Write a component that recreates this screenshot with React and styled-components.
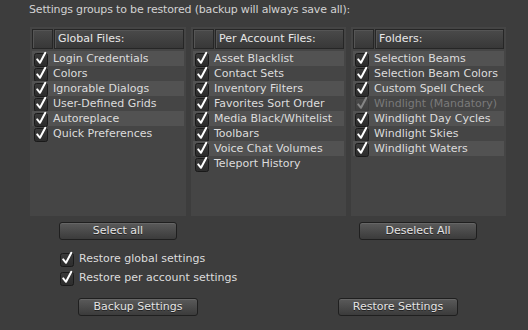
import React from "react";
import styled, { createGlobalStyle } from "styled-components";

const Global = createGlobalStyle`
  html, body { margin: 0; padding: 0; background: #3d3d3d; }
  body { font-family: "DejaVu Sans", "Liberation Sans", sans-serif; font-size: 11px; }
`;

const Page = styled.div`
  width: 528px;
  height: 330px;
  background: #3d3d3d;
  color: #d8d8d8;
  display: flex;
  flex-direction: column;
  overflow: hidden;
`;

const Title = styled.div`
  padding: 3px 0 0 29px;
  height: 14px;
  line-height: 14px;
  color: #d2d2d2;
  letter-spacing: -0.17px;
`;

const Columns = styled.div`
  display: flex;
  gap: 5px;
  margin: 10px 0 0 30px;
`;

const Panel = styled.div`
  width: ${(p) => p.$w}px;
  height: 189px;
  box-sizing: border-box;
  padding: 2px;
  background: #454545;
  display: flex;
  flex-direction: column;
`;

const Header = styled.div`
  display: flex;
  height: 20px;
  margin-bottom: 2px;
`;

const HeadCell = styled.div`
  box-sizing: border-box;
  height: 20px;
  border: 1px solid #262626;
  background: linear-gradient(#4a4a4a, #383838);
  box-shadow: inset 1px 1px 0 #555;
  ${(p) => (p.$grow ? "flex: 1; margin-left: 1px;" : "width: 21px;")}
  padding-left: 3px;
  line-height: 18px;
  color: #e8e8e8;
`;

const Row = styled.div`
  display: flex;
  align-items: center;
  height: 15px;
  background: ${(p) => (p.$hl ? "#525252" : "transparent")};
  color: ${(p) => (p.$disabled ? "#7a7a7a" : "#dcdcdc")};
  white-space: nowrap;
`;

const BoxWrap = styled.span`
  display: inline-flex;
  width: 16px;
  height: 16px;
  margin: 0 4px 0 ${(p) => p.$ml ?? 1}px;
  flex: none;
`;

const Label = styled.span`
  line-height: 15px;
`;

const Check = ({ disabled, ml }) => (
  <BoxWrap $ml={ml}>
    <svg width="16" height="16" viewBox="0 0 16 16">
      <defs>
        <linearGradient id={disabled ? "cbd" : "cb"} x1="0" y1="0" x2="0" y2="1">
          <stop offset="0" stopColor={disabled ? "#4a4a4a" : "#3a3a3a"} />
          <stop offset="1" stopColor={disabled ? "#3e3e3e" : "#2c2c2c"} />
        </linearGradient>
      </defs>
      <rect
        x="1.5"
        y="2.5"
        width="13"
        height="13"
        rx="2"
        fill={`url(#${disabled ? "cbd" : "cb"})`}
        stroke={disabled ? "#3a3a3a" : "#1a1a1a"}
      />
      <path
        d="M4.2 8.4 L7 11.8 L12.3 1.8"
        fill="none"
        stroke={disabled ? "#858585" : "#ffffff"}
        strokeWidth="2"
        strokeLinecap="round"
        strokeLinejoin="round"
      />
    </svg>
  </BoxWrap>
);

const ButtonRow = styled.div`
  display: flex;
  margin-top: ${(p) => p.$mt}px;
  padding-left: ${(p) => p.$pl}px;
  gap: ${(p) => p.$gap}px;
`;

const Button = styled.button`
  width: ${(p) => p.$w}px;
  height: 18px;
  box-sizing: border-box;
  border: 1px solid #1f1f1f;
  border-radius: 3px;
  background: linear-gradient(#5a5a5a, #3b3b3b);
  box-shadow: inset 0 1px 0 #666;
  color: #e4e4e4;
  font-family: "DejaVu Sans", sans-serif;
  font-size: 11px;
  padding: 0;
  line-height: 16px;
  text-shadow: 0 1px 0 #222;
`;

const Options = styled.div`
  display: flex;
  flex-direction: column;
  gap: 4px;
  margin: 11px 0 0 59px;
`;

const OptRow = styled.div`
  display: flex;
  align-items: center;
  height: 15px;
  color: #dcdcdc;
`;

const columns = [
  {
    title: "Global Files:",
    w: 156,
    items: [
      "Login Credentials",
      "Colors",
      "Ignorable Dialogs",
      "User-Defined Grids",
      "Autoreplace",
      "Quick Preferences",
    ],
  },
  {
    title: "Per Account Files:",
    w: 155,
    items: [
      "Asset Blacklist",
      "Contact Sets",
      "Inventory Filters",
      "Favorites Sort Order",
      "Media Black/Whitelist",
      "Toolbars",
      "Voice Chat Volumes",
      "Teleport History",
    ],
  },
  {
    title: "Folders:",
    w: 155,
    items: [
      "Selection Beams",
      "Selection Beam Colors",
      "Custom Spell Check",
      { label: "Windlight (Mandatory)", disabled: true },
      "Windlight Day Cycles",
      "Windlight Skies",
      "Windlight Waters",
    ],
  },
];

export default function App() {
  return (
    <Page>
      <Global />
      <Title>Settings groups to be restored (backup will always save all):</Title>
      <Columns>
        {columns.map((c) => (
          <Panel key={c.title} $w={c.w}>
            <Header>
              <HeadCell />
              <HeadCell $grow>{c.title}</HeadCell>
            </Header>
            {c.items.map((it, i) => {
              const label = typeof it === "string" ? it : it.label;
              const disabled = typeof it !== "string" && it.disabled;
              return (
                <Row key={label} $hl={i % 2 === 0} $disabled={disabled}>
                  <Check disabled={disabled} />
                  <Label>{label}</Label>
                </Row>
              );
            })}
          </Panel>
        ))}
      </Columns>
      <ButtonRow $mt={6} $pl={59} $gap={182}>
        <Button $w={118}>Select all</Button>
        <Button $w={118}>Deselect All</Button>
      </ButtonRow>
      <Options>
        <OptRow>
          <Check ml={0} />
          <Label>Restore global settings</Label>
        </OptRow>
        <OptRow>
          <Check ml={0} />
          <Label>Restore per account settings</Label>
        </OptRow>
      </Options>
      <ButtonRow $mt={13} $pl={78} $gap={140}>
        <Button $w={120}>Backup Settings</Button>
        <Button $w={120}>Restore Settings</Button>
      </ButtonRow>
    </Page>
  );
}
